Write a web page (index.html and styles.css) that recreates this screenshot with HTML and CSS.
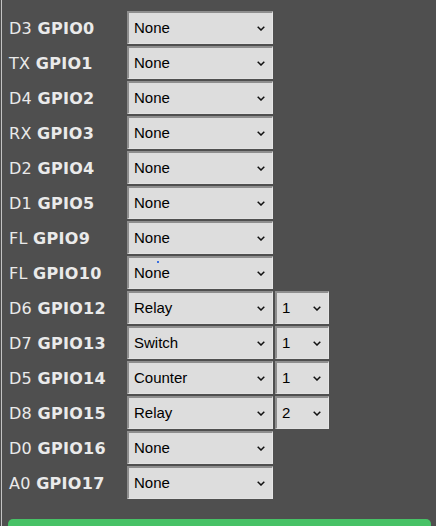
FILE: index.html
```html
<!DOCTYPE html>
<html>
<head>
<meta charset="utf-8">
<link rel="stylesheet" href="styles.css">
</head>
<body>
<div class="panel">
  <div class="rows">
    <div class="row"><span class="lbl">D3 <b>GPIO0</b></span><div class="sel wide">None</div></div>
    <div class="row"><span class="lbl">TX <b>GPIO1</b></span><div class="sel wide">None</div></div>
    <div class="row"><span class="lbl">D4 <b>GPIO2</b></span><div class="sel wide">None</div></div>
    <div class="row"><span class="lbl">RX <b>GPIO3</b></span><div class="sel wide">None</div></div>
    <div class="row"><span class="lbl">D2 <b>GPIO4</b></span><div class="sel wide">None</div></div>
    <div class="row"><span class="lbl">D1 <b>GPIO5</b></span><div class="sel wide">None</div></div>
    <div class="row"><span class="lbl">FL <b>GPIO9</b></span><div class="sel wide">None</div></div>
    <div class="row"><span class="lbl">FL <b>GPIO10</b></span><div class="sel wide">None<span class="dot"></span></div></div>
    <div class="row"><span class="lbl">D6 <b>GPIO12</b></span><div class="sel wide">Relay</div><div class="sel narrow">1</div></div>
    <div class="row"><span class="lbl">D7 <b>GPIO13</b></span><div class="sel wide">Switch</div><div class="sel narrow">1</div></div>
    <div class="row"><span class="lbl">D5 <b>GPIO14</b></span><div class="sel wide">Counter</div><div class="sel narrow">1</div></div>
    <div class="row"><span class="lbl">D8 <b>GPIO15</b></span><div class="sel wide">Relay</div><div class="sel narrow">2</div></div>
    <div class="row"><span class="lbl">D0 <b>GPIO16</b></span><div class="sel wide">None</div></div>
    <div class="row"><span class="lbl">A0 <b>GPIO17</b></span><div class="sel wide">None</div></div>
  </div>
  <div class="btn"></div>
</div>
</body>
</html>
```
FILE: styles.css
```css
html, body {
  margin: 0;
  padding: 0;
  background: #4f4f4f;
  height: 100%;
  overflow: hidden;
}
.panel {
  margin-left: 1px;
  border-left: 1px solid #c4c4c4;
  min-height: 100%;
  padding: 11px 0 0 5px;
  box-sizing: border-box;
}
.rows {
  display: flex;
  flex-direction: column;
  gap: 2px;
}
.row {
  display: flex;
  align-items: center;
  gap: 2px;
  height: 33px;
}
.lbl {
  width: 116px;
  padding-left: 2px;
  padding-top: 2px;
  font-family: "DejaVu Sans", Verdana, sans-serif;
  font-size: 16px;
  color: #eaeaea;
  white-space: nowrap;
  letter-spacing: 0.3px;
}
.lbl b {
  font-weight: bold;
}
.sel {
  position: relative;
  height: 33px;
  box-sizing: border-box;
  background: #dddddd;
  border-top: 2px solid #8e8e8e;
  border-left: 2px solid #8e8e8e;
  border-right: 1px solid #e6e6e6;
  border-bottom: 1px solid #e2e2e2;
  font-family: "Liberation Sans", Arial, sans-serif;
  font-size: 15px;
  color: #000;
  line-height: 30px;
  padding-left: 5px;
  background-image: url("data:image/svg+xml,%3Csvg xmlns='http://www.w3.org/2000/svg' width='8' height='5' viewBox='0 0 8 5'%3E%3Cpath d='M0.7 0.7 L4 4 L7.3 0.7' fill='none' stroke='%23111' stroke-width='1.5'/%3E%3C/svg%3E");
  background-repeat: no-repeat;
  background-position: right 7px center;
}
.wide {
  width: 146px;
}
.narrow {
  width: 54px;
  padding-left: 5px;
}
.dot {
  position: absolute;
  left: 28px;
  top: 3px;
  width: 2px;
  height: 2px;
  background: #3a6fe0;
}
.btn {
  margin: 20px 5px 0 1px;
  height: 40px;
  background: #47c266;
  border-radius: 5px;
}
```
